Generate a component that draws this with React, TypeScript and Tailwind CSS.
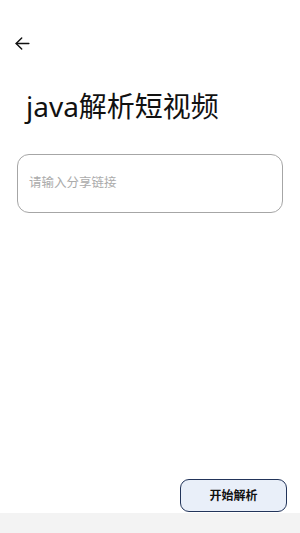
import React from "react";

export default function App() {
  return (
    <div
      className="flex h-[533px] w-[300px] flex-col bg-white"
      style={{ fontFamily: '"Noto Sans", "Noto Sans CJK SC", sans-serif' }}
    >
      <div className="flex h-[86px] items-start pl-[13px] pt-[34px]">
        <svg width="19" height="19" viewBox="0 0 24 24" fill="none" stroke="#111" strokeWidth="1.8" strokeLinecap="round" strokeLinejoin="round">
          <path d="M20 12H4" />
          <path d="M11 5l-7 7 7 7" />
        </svg>
      </div>
      <div className="pl-[26px] text-[28px] leading-[40px] text-[#111]">java解析短视频</div>
      <div className="px-[17px] pt-[28px]">
        <div className="flex h-[59px] items-center rounded-[12px] border border-[#a6a6a6] bg-white pl-[11px] text-[12.5px] text-[#ababab]">
          请输入分享链接
        </div>
      </div>
      <div className="flex-1" />
      <div className="flex justify-end pr-[13px] pb-[1px]">
        <button className="flex h-[33px] w-[107px] items-center justify-center rounded-[9px] border border-[#22345a] bg-[#e9eff9] text-[12px] font-bold text-[#111]">
          开始解析
        </button>
      </div>
      <div className="h-[20px] bg-[#f3f3f3]" />
    </div>
  );
}
